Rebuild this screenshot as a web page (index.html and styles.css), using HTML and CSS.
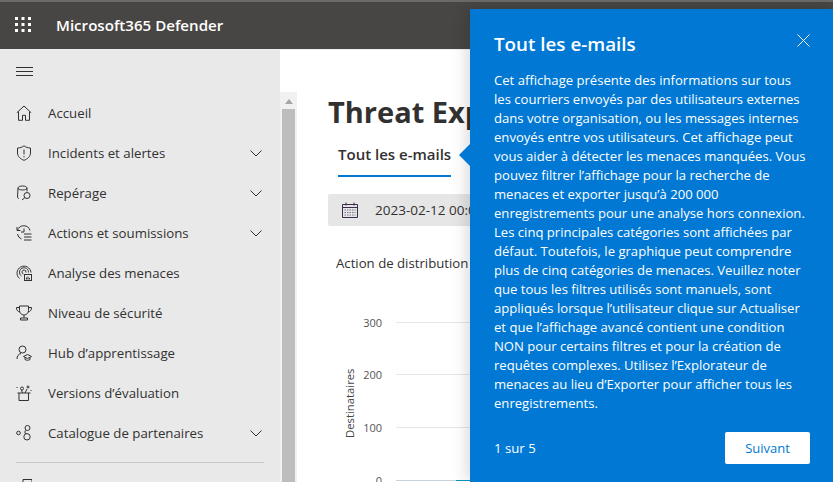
FILE: index.html
```html
<!DOCTYPE html>
<html lang="fr">
<head>
<meta charset="utf-8">
<title>Microsoft365 Defender</title>
<link rel="stylesheet" href="styles.css">
</head>
<body>
<header class="topbar">
  <svg class="waffle" width="16" height="15" viewBox="0 0 16 15" fill="#fff"><rect x="0" y="0" width="3" height="3"/><rect x="6.500" y="0" width="3" height="3"/><rect x="13" y="0" width="3" height="3"/><rect x="0" y="6" width="3" height="3"/><rect x="6.500" y="6" width="3" height="3"/><rect x="13" y="6" width="3" height="3"/><rect x="0" y="12" width="3" height="3"/><rect x="6.500" y="12" width="3" height="3"/><rect x="13" y="12" width="3" height="3"/></svg>
  <span class="brand">Microsoft365 Defender</span>
</header>
<div class="shell">
  <nav class="sidebar">
    <div class="burger"><svg width="17" height="9" viewBox="0 0 17 9" stroke="#323130" fill="none"><path d="M0 .5h17M0 4.500h17M0 8.500h17"/></svg></div>
    <ul class="navlist">
      <li class="navitem"><svg class="ico" viewBox="0 0 16 16"><path d="M.8 7.800 8 1l7.200 6.800M2.500 6.500v8.800h4v-5h3v5h4V6.500"/></svg><span class="label">Accueil</span></li>
      <li class="navitem"><svg class="ico" viewBox="0 0 16 16"><path d="M8 .8c2 1.500 4 2.200 6.500 2.200v5c0 3.500-3 6-6.500 7.300C4.500 14 1.500 11.500 1.500 8V3C4 3 6 2.300 8 .8zM8 4.500v5M8 11v1.300"/></svg><span class="label">Incidents et alertes</span><svg class="chev" viewBox="0 0 12 7"><path d="M.5.5 6 6l5.500-5.500"/></svg></li>
      <li class="navitem"><svg class="ico" viewBox="0 0 16 16"><path d="M3 13.500c-.7 0-1.500-.5-1.500-1.500L2 3c0-1.200 1.800-2 4.500-2S11 1.800 11 3v3.500M2 3c0 1.200 1.800 2 4.500 2S11 4.200 11 3"/><circle cx="11" cy="10.500" r="3"/><path d="M8.800 12.700 6 15"/></svg><span class="label">Repérage</span><svg class="chev" viewBox="0 0 12 7"><path d="M.5.5 6 6l5.500-5.500"/></svg></li>
      <li class="navitem"><svg class="ico" viewBox="0 0 16 16"><path d="M1.500 5.500A6.500 6.500 0 0 1 14 5.500M1 2v3.500h3.500M8 3.500V7H5M1.500 9A6.500 6.500 0 0 0 5.500 14M8 9h7.500M8 12h7.500M8 15h7.500"/></svg><span class="label">Actions et soumissions</span><svg class="chev" viewBox="0 0 12 7"><path d="M.5.5 6 6l5.500-5.500"/></svg></li>
      <li class="navitem"><svg class="ico" viewBox="0 0 16 16"><path d="M3.500 13.500A7 7 0 1 1 15 7.500M5.500 11A4.500 4.500 0 1 1 12.500 7.500M7.500 9A2 2 0 1 1 10 7.500"/><rect x="8.500" y="9.500" width="7" height="6"/><path d="M10.500 14.500v-2M12 14.500v-3M13.500 14.500v-1.500"/></svg><span class="label">Analyse des menaces</span></li>
      <li class="navitem"><svg class="ico" viewBox="0 0 16 16"><path d="M3.500 1h9v4.500a4.500 4.500 0 0 1-9 0zM3.500 2.500H.5c0 2.500 1 4 3.300 4.500M12.500 2.500h3c0 2.500-1 4-3.300 4.500M8 10v3M4.500 13h7v2h-7z"/></svg><span class="label">Niveau de sécurité</span></li>
      <li class="navitem"><svg class="ico" viewBox="0 0 16 16"><circle cx="6.500" cy="4.500" r="3.500"/><path d="M1 14c0-3 1.500-5 4-5.500M7.500 11.500 11.500 9.500l4 2-4 2zM9 12.500v2c1.500 1 3.500 1 5 0v-2"/></svg><span class="label">Hub d’apprentissage</span></li>
      <li class="navitem"><svg class="ico" viewBox="0 0 16 16"><path d="M3 8v7.500h9.500V8M1.500 8h13M6.500 8 5.500 5M9 8l2-4"/><circle cx="6" cy="3.500" r="1.500"/><path d="M.5 2.500h1M12 .5v3M10.500 2h3M14.500 5.500h1"/></svg><span class="label">Versions d’évaluation</span></li>
      <li class="navitem"><svg class="ico" viewBox="0 0 16 16"><circle cx="2.500" cy="8" r="1.800"/><circle cx="11.500" cy="3" r="2.500"/><circle cx="11" cy="11.800" r="3.200"/><path d="M10 5.200 8.700 7l1 2"/></svg><span class="label">Catalogue de partenaires</span><svg class="chev" viewBox="0 0 12 7"><path d="M.5.5 6 6l5.500-5.500"/></svg></li>
    </ul>
    <hr class="divider">
    <svg class="ico tail" viewBox="0 0 16 16"><path d="M7 .5h9v14H7z"/></svg>
  </nav>
  <main class="main">
    <div class="scrollbar"><span class="sb-arrow"></span><span class="sb-thumb"></span></div>
    <section class="content">
      <h1 class="title">Threat Explorer</h1>
      <div class="tabs"><span class="tab">Tout les e-mails</span></div>
      <div class="datebar">
        <svg class="cal" width="16" height="16" viewBox="0 0 16 16" fill="none" stroke="#3b2a4a"><path d="M.5 2.500h15v13H.5zM.5 5.500h15M4 .5v3M12 .5v3"/><path stroke="#7a6f8a" stroke-dasharray="1.500 1" d="M2.500 8h11M2.500 10.500h11M2.500 13h11"/></svg>
        <span class="datetext">2023-02-12 00:00</span>
      </div>
      <p class="chart-title">Action de distribution</p>
      <div class="chart">
        <div class="ylabel">Destinataires</div>
        <div class="grid">
          <div class="gridrow"><span class="tick">300</span><span class="gline"></span></div>
          <div class="gridrow"><span class="tick">200</span><span class="gline"></span></div>
          <div class="gridrow"><span class="tick">100</span><span class="gline"></span></div>
          <div class="gridrow"><span class="tick">0</span><span class="gline base"><span class="seg"></span></span></div>
        </div>
      </div>
    </section>
  </main>
</div>
<aside class="bubble">
  <span class="beak"></span>
  <div class="bubble-head">
    <h2 class="bubble-title">Tout les e-mails</h2>
    <svg class="close" width="13" height="13" viewBox="0 0 13 13" stroke="#fff" fill="none"><path d="M.5.500l12 12M12.500.500l-12 12"/></svg>
  </div>
  <p class="bubble-text">Cet affichage présente des informations sur tous<br>les courriers envoyés par des utilisateurs externes<br>dans votre organisation, ou les messages internes<br>envoyés entre vos utilisateurs. Cet affichage peut<br>vous aider à détecter les menaces manquées. Vous<br>pouvez filtrer l’affichage pour la recherche de<br>menaces et exporter jusqu’à 200 000<br>enregistrements pour une analyse hors connexion.<br>Les cinq principales catégories sont affichées par<br>défaut. Toutefois, le graphique peut comprendre<br>plus de cinq catégories de menaces. Veuillez noter<br>que tous les filtres utilisés sont manuels, sont<br>appliqués lorsque l’utilisateur clique sur Actualiser<br>et que l’affichage avancé contient une condition<br>NON pour certains filtres et pour la création de<br>requêtes complexes. Utilisez l’Explorateur de<br>menaces au lieu d’Exporter pour afficher tous les<br>enregistrements.</p>
  <div class="bubble-foot">
    <span class="count">1 sur 5</span>
    <button class="next">Suivant</button>
  </div>
</aside>
</body>
</html>
```
FILE: styles.css
```css
* { box-sizing: border-box; }
html, body { margin: 0; height: 100%; overflow: hidden; }
body { width: 833px; height: 482px; position: relative; background: #fff; color: #323130; font-family: "Open Sans", "Noto Sans", sans-serif; font-size: 13px; }

.topbar { height: 50px; background: #484644; border-top: 2px solid #6a6a6a; border-bottom: 1px solid #eee; display: flex; align-items: center; padding: 0 0 2px 15px; color: #fff; }
.waffle { flex: none; }
.brand { margin-left: 25px; font-size: 15.100px; font-weight: 600; }

.shell { display: flex; height: 432px; }
.sidebar { width: 280px; flex: none; background: #e9e9e9; padding: 0 16px; overflow: hidden; }
.burger { height: 43px; display: flex; align-items: center; }
.navlist { list-style: none; margin: 0; padding: 0; }
.navitem { height: 40px; display: flex; align-items: center; }
.ico { width: 16px; height: 16px; flex: none; fill: none; stroke: #323130; stroke-width: 1; }
.label { margin-left: 16px; flex: 1; font-size: 13.250px; color: #323130; }
.chev { width: 12px; height: 7px; flex: none; margin-right: 2px; fill: none; stroke: #323130; stroke-width: 1; }
.divider { border: 0; border-top: 1px solid #c8c8c8; margin: 9px 0 16px; }
.tail { display: block; }

.main { flex: 1; display: flex; padding-top: 42px; min-width: 0; overflow: hidden; }
.scrollbar { width: 17px; flex: none; background: #f1f1f1; padding: 0 2px; display: flex; flex-direction: column; align-items: center; }
.sb-arrow { margin-top: 7px; width: 0; height: 0; border: 4px solid transparent; border-top: 0; border-bottom: 5px solid #a6a6a6; }
.sb-thumb { margin-top: 5px; width: 13px; flex: 1; background: #bdbdbd; }
.content { flex: 1; padding-left: 31px; min-width: 0; }
.title { margin: 0; font-size: 29px; line-height: 40px; font-weight: 700; color: #323130; white-space: nowrap; }
.tabs { margin-top: 4px; height: 41px; }
.tab { display: inline-block; margin-left: 10px; height: 41px; line-height: 36px; font-size: 15px; font-weight: 600; border-bottom: 2px solid #0078d4; width: 113px; white-space: nowrap; }
.datebar { margin-top: 17px; height: 32px; width: 400px; background: #e6e6e6; border-radius: 2px; display: flex; align-items: center; padding-left: 14px; }
.datetext { margin-left: 17px; font-size: 13.500px; white-space: nowrap; }
.chart-title { margin: 27px 0 0 8px; line-height: 20px; font-size: 13.200px; white-space: nowrap; }
.chart { margin-top: 23px; margin-left: 14px; display: flex; }
.ylabel { writing-mode: vertical-rl; transform: rotate(180deg); font-size: 11.300px; color: #444; height: 120px; margin-top: 22px; width: 16px; text-align: left; }
.grid { flex: 1; padding-left: 2px; }
.gridrow { height: 52.670px; display: flex; align-items: center; gap: 14px; }
.tick { width: 22px; text-align: right; font-size: 11px; color: #555; flex: none; }
.gline { width: 300px; height: 1px; background: #e6e6e6; }
.gline.base { background: #c9d3de; }
.seg { display: block; margin-left: 60px; width: 20px; height: 1px; background: #0099bc; }

.bubble { position: absolute; left: 470px; top: 9px; width: 363px; height: 473px; background: #0078d4; color: #fff; padding: 21px 23px 0 24px; box-shadow: -4px 0 14px rgba(0,0,0,.14); display: flex; flex-direction: column; }
.beak { position: absolute; left: -11px; top: 135px; width: 22px; height: 22px; background: #0078d4; clip-path: polygon(50% 0, 100% 50%, 50% 100%, 0 50%); }
.bubble-head { display: flex; justify-content: space-between; align-items: flex-start; }
.bubble-title { margin: 0; font-size: 18.800px; line-height: 28px; font-weight: 600; }
.close { margin-top: 4px; }
.bubble-text { margin: 13px 0 0; font-size: 13.100px; line-height: 19px; color: #fff; white-space: nowrap; }
.bubble-foot { margin-top: 19px; display: flex; justify-content: space-between; align-items: center; }
.count { font-size: 13.200px; }
.next { width: 85px; height: 32px; border: 0; border-radius: 2px; background: #fff; color: #0078d4; font: 13px "Open Sans", "Noto Sans", sans-serif; }
```
